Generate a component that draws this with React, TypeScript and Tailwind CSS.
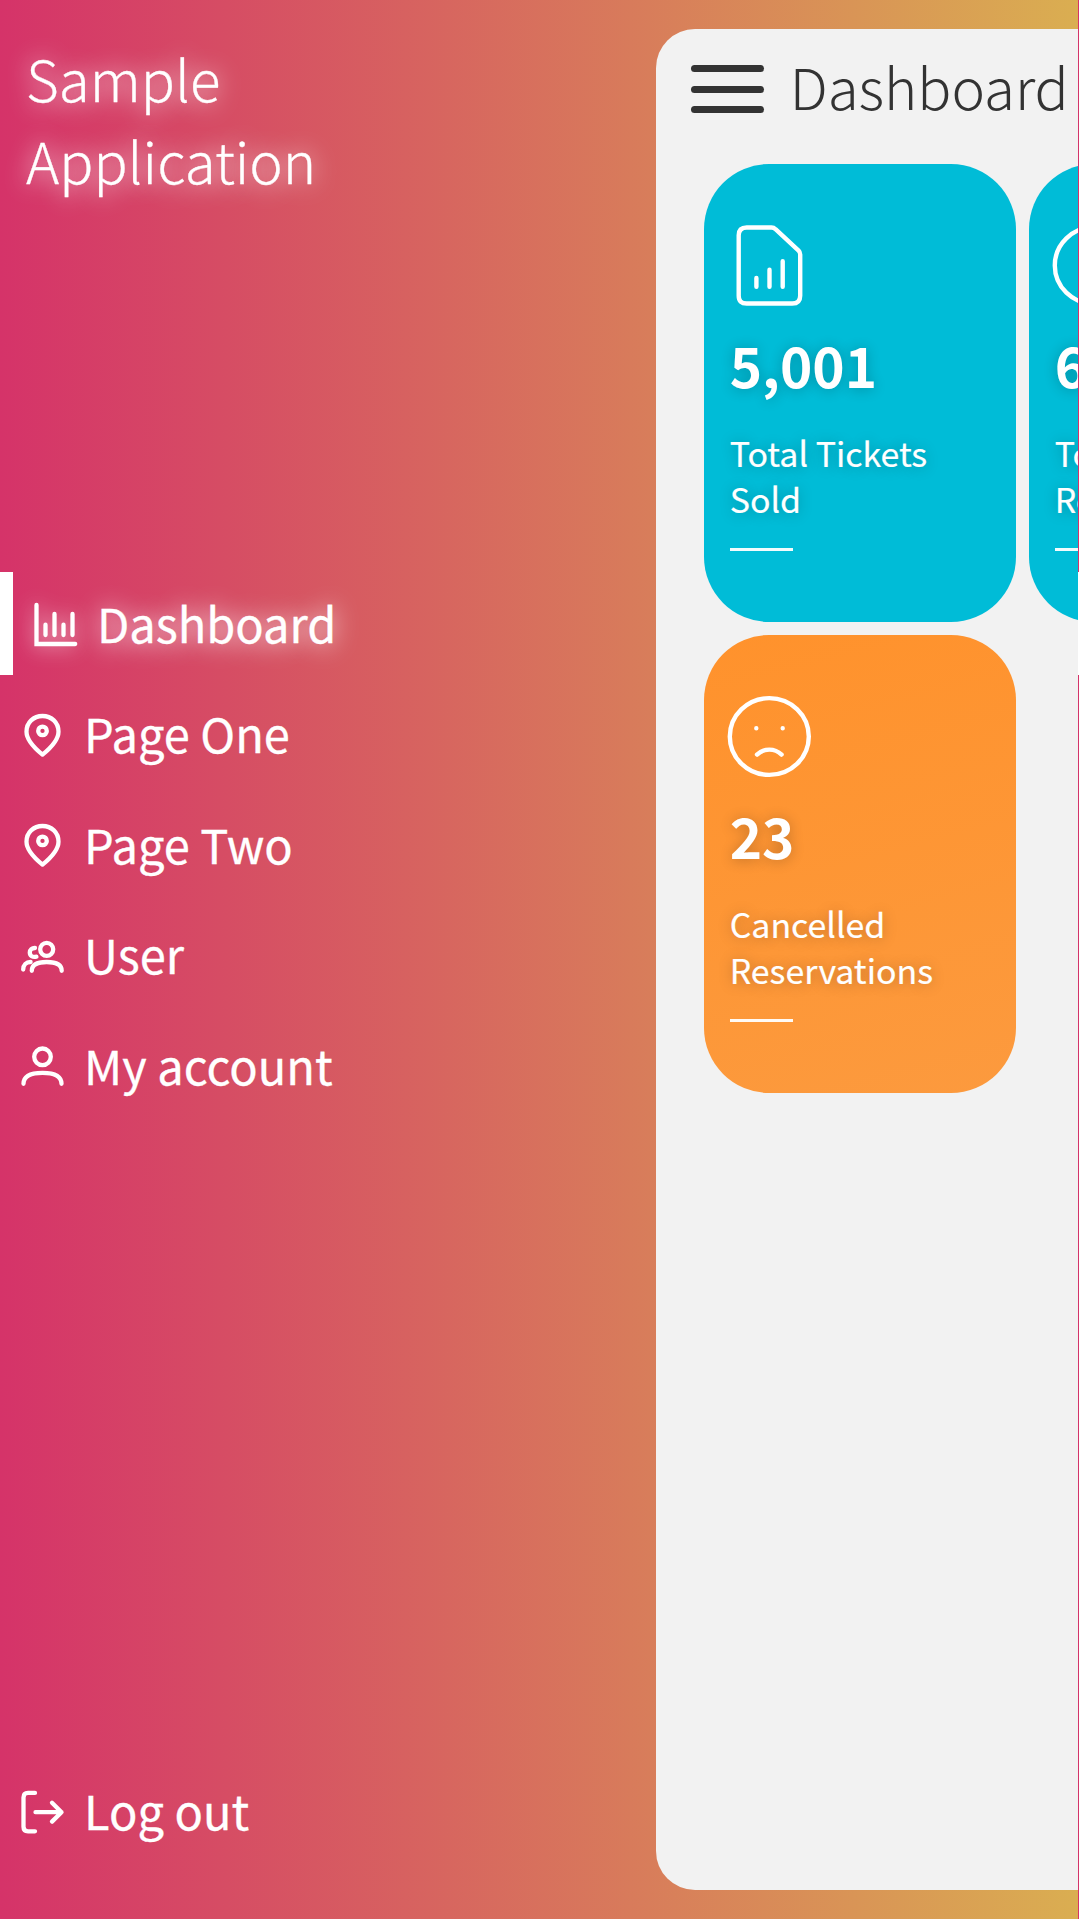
import type { ReactNode } from 'react';

const DashboardIcon = () => (
  <>
    <path d="M5.5 6V45H44.2" strokeLinejoin="miter" />
    <path d="M14.5 25.7V36M23.5 15V36M32.5 25.7V36M41.5 15V36" />
  </>
);

const PinIcon = () => (
  <>
    <path d="M40.5 21.7C40.5 29.5 32 38.5 24.5 44.6C17 38.5 8.5 29.5 8.5 21.7C8.5 12.5 15.5 6 24.5 6S40.5 12.5 40.5 21.7Z" />
    <circle cx="24.5" cy="20.9" r="4.3" />
  </>
);

const UsersIcon = () => (
  <>
    <circle cx="28.7" cy="18.3" r="6.5" />
    <path d="M13.8 39.8C13.8 33.4 20 31 28.7 31S43.7 33.4 43.7 39.8" />
    <path d="M17 17C14 16.9 11.8 18.6 11.8 21.6C11.8 24.9 14.6 26.6 18.4 25.7" />
    <path d="M5.2 38.6C5.2 33.6 8.2 31 12.6 31" />
  </>
);

const UserIcon = () => (
  <>
    <circle cx="24.5" cy="15.8" r="8.3" />
    <path d="M5.5 42.8C5.5 34.4 13.5 31.8 24.5 31.8S43.5 34.4 43.5 42.8" />
  </>
);

const LogoutIcon = () => (
  <>
    <path d="M17 5.9H10C7 5.9 5.5 7.4 5.5 10.4V39.8C5.5 42.8 7 44.3 10 44.3H17" />
    <path d="M17.5 25.2H43.5M34 15.8L43.5 25.2L34 34.6" />
  </>
);

const FileChartIcon = () => (
  <>
    <path d="M16.7 11.5H41.5C43.2 11.5 44.3 12 45.5 13.2L68.6 34.6C69.7 35.7 70.2 36.8 70.2 38.4V79.7C70.2 85 67.7 87.5 62.2 87.5H16.7C11.2 87.5 8.7 85 8.7 79.7V19.3C8.7 14 11.2 11.5 16.7 11.5Z" />
    <path d="M26.4 62V70.8M39.5 53.7V70.8M52.7 45.2V70.8" />
  </>
);

const SadFaceIcon = () => (
  <>
    <ellipse cx="39.3" cy="49.5" rx="39.5" ry="38.4" />
    <path d="M26.3 41.2h.01M52.7 41.2h.01" />
    <path d="M27 67.6C34 60.9 44.6 60.9 51.6 67.6" />
  </>
);

function NavItem({ icon, label, active = false }: { icon: ReactNode; label: string; active?: boolean }) {
  return (
    <a className="flex h-[103px] items-center">
      {active && <span className="h-full w-[13px] bg-white" />}
      <svg
        viewBox="0 0 49 49"
        className={
          active
            ? 'ml-[17.5px] size-[49px] overflow-visible drop-shadow-[0_1px_10px_rgba(255,255,255,0.65)]'
            : 'ml-[17.5px] size-[49px]'
        }
        fill="none"
        stroke="currentColor"
        strokeWidth="4.3"
        strokeLinecap="round"
        strokeLinejoin="round"
      >
        {icon}
      </svg>
      <span
        className={
          active
            ? 'ml-[17.5px] pb-[2px] text-[47px] leading-[68px] [-webkit-text-stroke:0.3px_#fff] [text-shadow:0_1px_24px_#fff]'
            : 'ml-[17.5px] pb-[2px] text-[47px] leading-[68px] [-webkit-text-stroke:0.3px_#fff]'
        }
      >
        {label}
      </span>
    </a>
  );
}

function StatCard({ icon, value, label, tone }: { icon: ReactNode; value: string; label: string; tone: 'cyan' | 'orange' }) {
  return (
    <article
      className={
        tone === 'cyan'
          ? 'flex h-[458px] w-[312px] shrink-0 flex-col rounded-[65px] bg-[#00bcd7] px-[26px] pt-[52px] text-white'
          : 'flex h-[458px] w-[312px] shrink-0 flex-col rounded-[65px] bg-[linear-gradient(165deg,#ff922c,#fc9a3e)] px-[26px] pt-[52px] text-white'
      }
    >
      <svg
        viewBox="0 0 79 99"
        className="h-[99px] w-[79px] overflow-visible"
        fill="none"
        stroke="currentColor"
        strokeWidth="4.4"
        strokeLinecap="round"
        strokeLinejoin="round"
      >
        {icon}
      </svg>
      <strong className="mt-[13px] text-[54.9px] leading-[72px] font-bold [text-shadow:0_1px_14px_rgba(0,0,0,0.24)]">{value}</strong>
      <p className="mt-[30px] w-[210px] text-[33.9px] leading-[46px] [-webkit-text-stroke:0.2px_#fff] [text-shadow:0_1px_14px_rgba(0,0,0,0.26)]">
        {label}
      </p>
      <span className="mt-[26px] h-[3px] w-[63px] bg-white/95" />
    </article>
  );
}

export default function App() {
  return (
    <div className="flex h-[1919px] w-[1079px] overflow-hidden bg-[linear-gradient(90deg,#d53369,#daae51)] bg-[length:1078px_100%] font-['Noto_Sans_CJK_SC','Noto_Sans',sans-serif]">
      <aside className="flex w-[656px] shrink-0 flex-col text-white">
        <h1 className="mt-[36px] ml-[26px] w-[300px] text-[56.5px] leading-[82px] font-light [-webkit-text-stroke:0.3px_#fff] [text-shadow:0_1px_25px_#fff]">
          Sample Application
        </h1>
        <nav className="mt-[372px] flex flex-col gap-[7.5px]">
          <NavItem icon={<DashboardIcon />} label="Dashboard" active />
          <NavItem icon={<PinIcon />} label="Page One" />
          <NavItem icon={<PinIcon />} label="Page Two" />
          <NavItem icon={<UsersIcon />} label="User" />
          <NavItem icon={<UserIcon />} label="My account" />
        </nav>
        <div className="mt-auto mb-[56.5px]">
          <NavItem icon={<LogoutIcon />} label="Log out" />
        </div>
      </aside>

      <main className="mt-[28.7px] mb-[29px] w-[422px] shrink-0 overflow-hidden rounded-l-[39px] bg-[#f2f2f2] text-[#333]">
        <header className="flex h-[112px] items-center pl-[34.6px]">
          <button className="mt-[9px] flex w-[73.8px] shrink-0 flex-col gap-[13.5px]" aria-label="Menu">
            <span className="h-[7px] rounded-full bg-[#333]" />
            <span className="h-[7px] rounded-full bg-[#333]" />
            <span className="h-[7px] rounded-full bg-[#333]" />
          </button>
          <h2 className="ml-[25.3px] pt-px text-[56.5px] leading-[82px] font-light">Dashboard</h2>
        </header>
        <section className="mt-[23px] ml-[47.7px] grid w-[637px] grid-cols-[312px_312px] gap-[13px]">
          <StatCard icon={<FileChartIcon />} value="5,001" label="Total Tickets Sold" tone="cyan" />
          <StatCard icon={<SadFaceIcon />} value="6" label="Total Reservations" tone="cyan" />
          <StatCard icon={<SadFaceIcon />} value="23" label="Cancelled Reservations" tone="orange" />
        </section>
      </main>

      <div className="w-px shrink-0 pt-[572px]">
        <div className="h-[103px] bg-white" />
      </div>
    </div>
  );
}
